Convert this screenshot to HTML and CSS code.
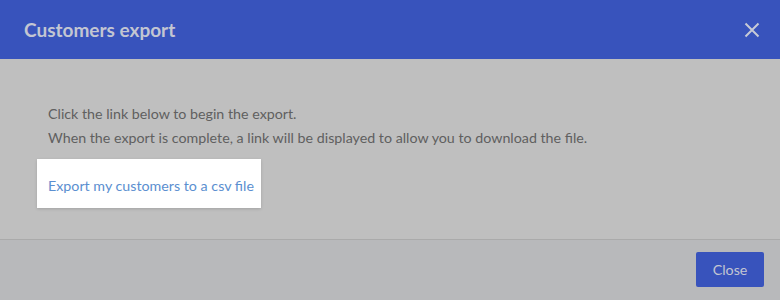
FILE: index.html
```html
<!DOCTYPE html>
<html>
<head>
<meta charset="utf-8">
<link rel="stylesheet" href="styles.css">
</head>
<body>
<div class="modal">
  <div class="header">
    <h1 class="title">Customers export</h1>
    <button class="close-x" aria-label="Close">
      <svg width="16" height="16" viewBox="0 0 16 16"><path d="M1.5 1.5L14.5 14.5M14.5 1.5L1.5 14.5" stroke="#c7cad6" stroke-width="2" fill="none"/></svg>
    </button>
  </div>
  <div class="content">
    <p class="line">Click the link below to begin the export.</p>
    <p class="line">When the export is complete, a link will be displayed to allow you to download the file.</p>
    <div class="link-box"><a class="export-link" href="#">Export my customers to a csv file</a></div>
  </div>
  <div class="footer">
    <button class="btn">Close</button>
  </div>
</div>
</body>
</html>
```
FILE: styles.css
```css
html, body {
  margin: 0;
  padding: 0;
}
body {
  width: 780px;
  height: 300px;
  overflow: hidden;
  font-family: Lato, "Liberation Sans", sans-serif;
  background: #bfbfbf;
}
.modal {
  display: flex;
  flex-direction: column;
  height: 300px;
}
.header {
  height: 59px;
  background: #3853bc;
  display: flex;
  align-items: center;
  justify-content: space-between;
  padding: 0 20px 0 24px;
  box-sizing: border-box;
}
.title {
  margin: 0;
  font-size: 19px;
  font-weight: 700;
  color: #c3c6d2;
}
.close-x {
  background: none;
  border: 0;
  padding: 0;
  width: 16px;
  height: 16px;
  display: flex;
}
.content {
  height: 181px;
  padding: 43px 37px 0;
  box-sizing: border-box;
  border-bottom: 1px solid #aaaaaa;
}
.line {
  margin: 0 0 0 11px;
  font-size: 14.25px;
  line-height: 24px;
  color: #606060;
}
.link-box {
  margin-top: 9px;
  width: 224px;
  height: 49px;
  box-sizing: border-box;
  background: #ffffff;
  padding: 0 11px;
  display: flex;
  align-items: center;
  box-shadow: 0 1px 3px rgba(0,0,0,0.15);
}
.export-link {
  font-size: 14.25px;
  color: #5b8fd0;
  text-decoration: none;
  white-space: nowrap;
  padding-top: 4px;
}
.footer {
  flex: 1;
  background: #b8b9bb;
  display: flex;
  justify-content: flex-end;
  align-items: flex-start;
  padding: 12px 16px 0;
}
.btn {
  width: 68px;
  height: 35px;
  border: 0;
  border-radius: 2px;
  background: #3853bc;
  color: #c3c6d2;
  font-family: Lato, "Liberation Sans", sans-serif;
  font-size: 14.25px;
  padding: 0;
}
```
